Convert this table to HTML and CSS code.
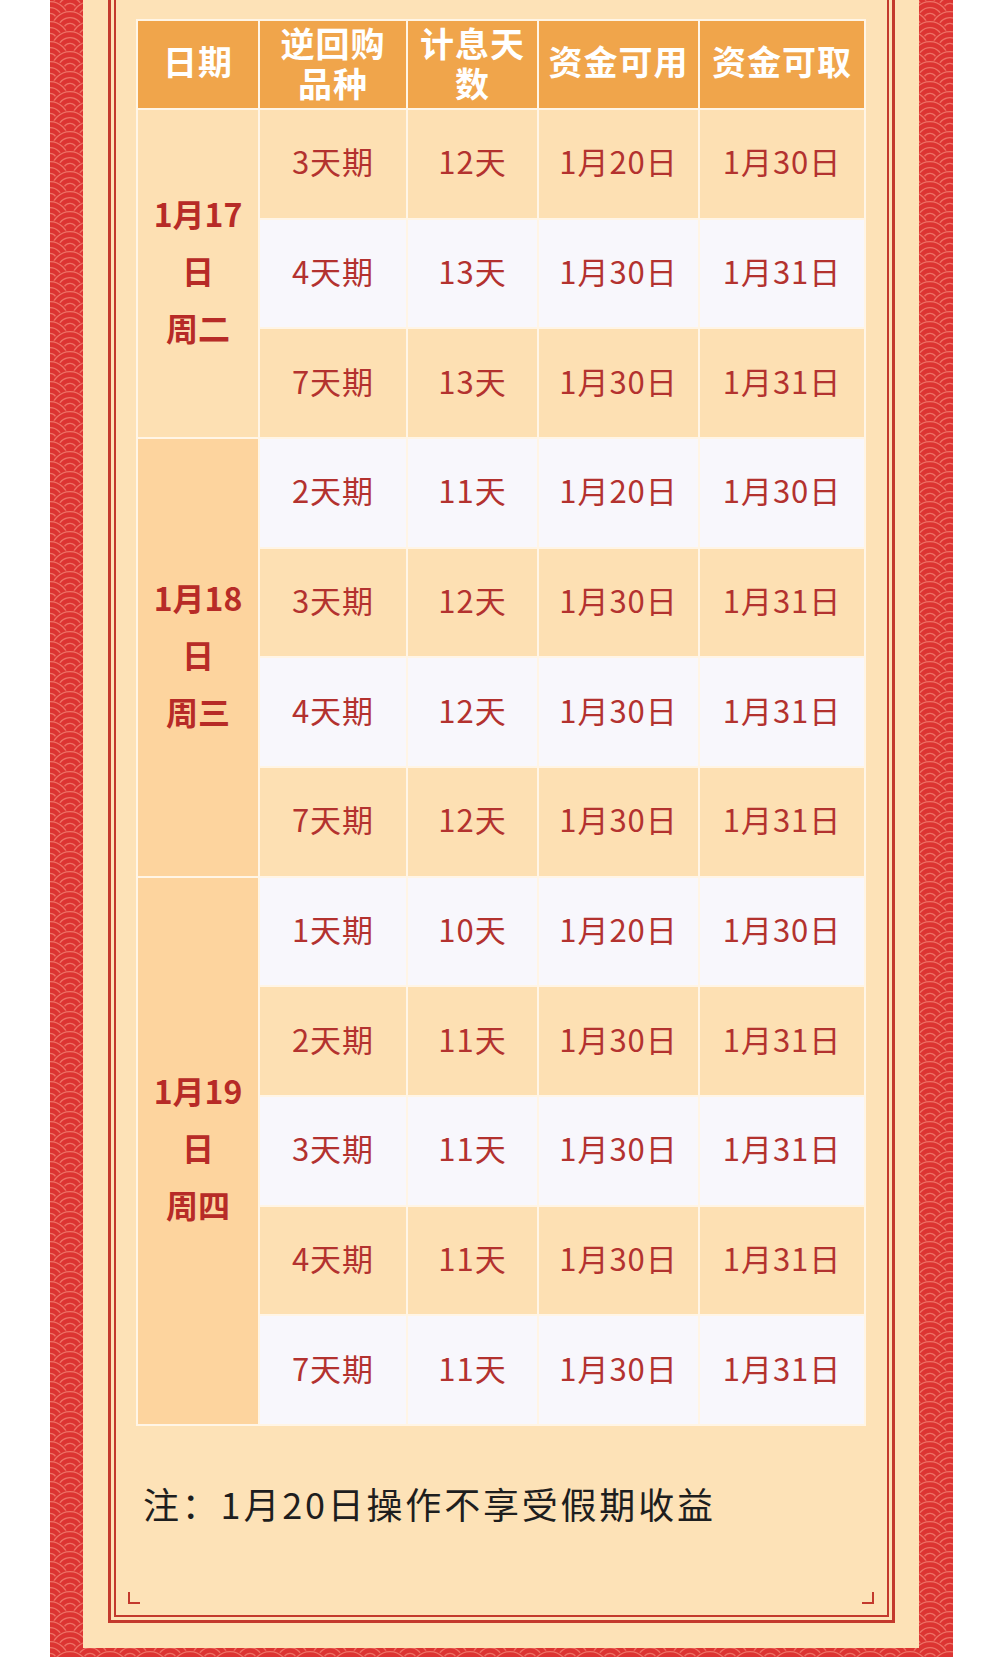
FILE: index.html
```html
<!DOCTYPE html>
<html lang="zh-CN">
<head>
<meta charset="utf-8">
<title>逆回购假期收益</title>
<link rel="stylesheet" href="styles.css">
</head>
<body>
<div class="frame">
  <svg class="waves" xmlns="http://www.w3.org/2000/svg" aria-hidden="true">
    <defs>
      <g id="scale">
        <circle r="20" fill="#dc3432"/>
        <circle r="18.4" fill="none" stroke="#ee7266" stroke-width="1.4"/>
        <circle r="12.4" fill="none" stroke="#ee7266" stroke-width="1.4"/>
        <circle r="6.6" fill="none" stroke="#ee7266" stroke-width="1.4"/>
      </g>
      <pattern id="seigaiha" width="40" height="20" patternUnits="userSpaceOnUse">
        <rect width="40" height="20" fill="#dc3432"/>
        <use href="#scale" x="20" y="-10"/>
        <use href="#scale" x="0" y="0"/>
        <use href="#scale" x="40" y="0"/>
        <use href="#scale" x="20" y="10"/>
        <use href="#scale" x="0" y="20"/>
        <use href="#scale" x="40" y="20"/>
        <use href="#scale" x="20" y="30"/>
      </pattern>
    </defs>
    <rect width="100%" height="100%" fill="url(#seigaiha)"/>
  </svg>
  <div class="cream">
    <div class="outer">
      <div class="inner">
        <div class="grid">
          <div class="th">日期</div>
          <div class="th two">逆回购<br>品种</div>
          <div class="th two">计息天<br>数</div>
          <div class="th">资金可用</div>
          <div class="th">资金可取</div>

          <div class="date span3 light">1月17<br>日<br>周二</div>
          <div class="td c">3天期</div><div class="td c">12天</div><div class="td c">1月20日</div><div class="td c">1月30日</div>
          <div class="td w">4天期</div><div class="td w">13天</div><div class="td w">1月30日</div><div class="td w">1月31日</div>
          <div class="td c">7天期</div><div class="td c">13天</div><div class="td c">1月30日</div><div class="td c">1月31日</div>

          <div class="date span4 dark">1月18<br>日<br>周三</div>
          <div class="td w">2天期</div><div class="td w">11天</div><div class="td w">1月20日</div><div class="td w">1月30日</div>
          <div class="td c">3天期</div><div class="td c">12天</div><div class="td c">1月30日</div><div class="td c">1月31日</div>
          <div class="td w">4天期</div><div class="td w">12天</div><div class="td w">1月30日</div><div class="td w">1月31日</div>
          <div class="td c">7天期</div><div class="td c">12天</div><div class="td c">1月30日</div><div class="td c">1月31日</div>

          <div class="date span5 dark">1月19<br>日<br>周四</div>
          <div class="td w">1天期</div><div class="td w">10天</div><div class="td w">1月20日</div><div class="td w">1月30日</div>
          <div class="td c">2天期</div><div class="td c">11天</div><div class="td c">1月30日</div><div class="td c">1月31日</div>
          <div class="td w">3天期</div><div class="td w">11天</div><div class="td w">1月30日</div><div class="td w">1月31日</div>
          <div class="td c">4天期</div><div class="td c">11天</div><div class="td c">1月30日</div><div class="td c">1月31日</div>
          <div class="td w">7天期</div><div class="td w">11天</div><div class="td w">1月30日</div><div class="td w">1月31日</div>
        </div>
        <p class="note">注：1月20日操作不享受假期收益</p>
        <span class="corner bl"></span>
        <span class="corner br"></span>
      </div>
    </div>
  </div>
</div>
</body>
</html>
```

FILE: styles.css
```css
html, body {
  margin: 0;
  padding: 0;
  background: #ffffff;
}

body {
  font-family: "Noto Sans CJK SC", "Noto Sans", sans-serif;
}

.frame {
  position: relative;
  width: 903px;
  height: 1657px;
  margin-left: 50px;
  padding: 0 34px 9px 33px;
  box-sizing: border-box;
  overflow: hidden;
}

.waves {
  position: absolute;
  top: 0;
  left: 0;
  width: 100%;
  height: 100%;
}

.cream {
  position: relative;
  height: 1648px;
  background: #fde2b7;
  padding: 0 24px 25px 25px;
  box-sizing: border-box;
}

.outer {
  height: 100%;
  border: 3px solid #c3392d;
  border-top: 0;
  padding: 0 3px 3px 3px;
  box-sizing: border-box;
}

.inner {
  position: relative;
  height: 100%;
  border: 2px solid #c3392d;
  border-top: 0;
  padding: 19px 21px 0 20px;
  box-sizing: border-box;
}

.grid {
  display: grid;
  grid-template-columns: 120px 146px 129px 159px 164px;
  grid-template-rows: 87px repeat(12, 107.67px);
  gap: 2px;
  padding: 2px;
  background: #fff5e6;
}

.th {
  display: flex;
  align-items: center;
  justify-content: center;
  text-align: center;
  padding-bottom: 8px;
  box-sizing: border-box;
  background: #f0a54b;
  color: #ffffff;
  font-weight: 700;
  font-size: 34px;
  line-height: 36px;
  letter-spacing: 1px;
}

.th.two {
  padding-bottom: 4px;
  line-height: 40px;
}

.td {
  display: flex;
  align-items: center;
  justify-content: center;
  padding-bottom: 6px;
  box-sizing: border-box;
  color: #b3322f;
  font-size: 31px;
  letter-spacing: 1px;
}

.td.c {
  background: #fde0b3;
}

.td.w {
  background: #f8f7fc;
}

.date {
  display: flex;
  align-items: center;
  justify-content: center;
  text-align: center;
  padding-bottom: 6px;
  box-sizing: border-box;
  color: #b72b27;
  font-weight: 700;
  font-size: 32px;
  line-height: 57px;
}

.date.light {
  background: #fde0b3;
}

.date.dark {
  background: #fdd49e;
}

.span3 { grid-row: span 3; }
.span4 { grid-row: span 4; }
.span5 { grid-row: span 5; }

.note {
  margin: 53px 0 0 0;
  padding-left: 7px;
  font-size: 36px;
  line-height: 49px;
  letter-spacing: 2.8px;
  color: #1e1e1e;
}

.corner {
  position: absolute;
  bottom: 11px;
  width: 10px;
  height: 10px;
  border-bottom: 2px solid #c3392d;
}

.corner.bl {
  left: 12px;
  border-left: 2px solid #c3392d;
}

.corner.br {
  right: 13px;
  border-right: 2px solid #c3392d;
}
```
